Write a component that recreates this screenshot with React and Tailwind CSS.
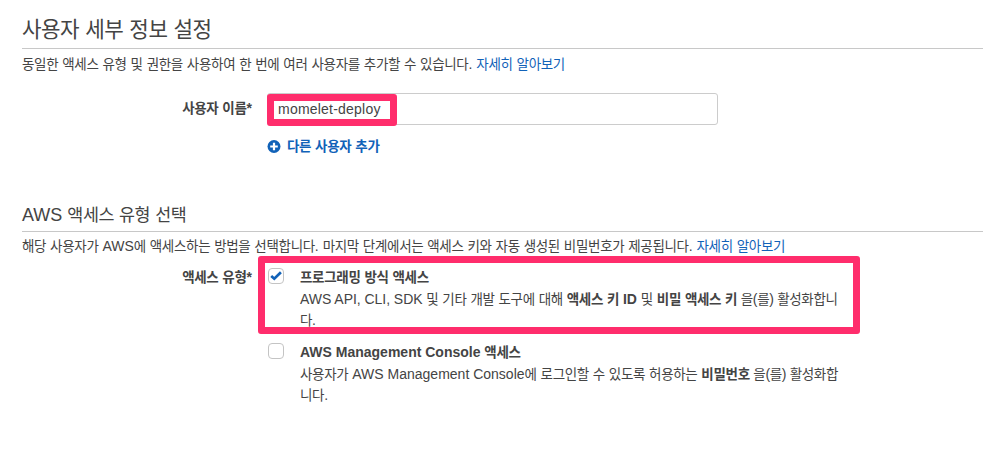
import React from "react";

// Hangul runs are set slightly smaller and tighter than the Latin text around them.
function T({ children }) {
  return String(children)
    .split(/([가-힣]+)/)
    .filter(Boolean)
    .map((part, i) =>
      /[가-힣]/.test(part) ? (
        <span key={i} className="text-[0.965em] tracking-[-0.0237em]">
          {part}
        </span>
      ) : (
        part
      ),
    );
}

function Link({ children }) {
  return (
    <a href="#" className="text-[#1162b8]">
      <T>{children}</T>
    </a>
  );
}

function Checkbox({ checked }) {
  return (
    <span className="flex h-4 w-4 shrink-0 items-center justify-center rounded-[4px] border border-[#c4c4c4] bg-white">
      {checked && (
        <svg viewBox="0 0 12 10" className="h-[10px] w-3" fill="none" stroke="#1162b8" strokeWidth="2.7">
          <path d="M1.2 4.9 L4.3 7.7 L10.9 1.3" />
        </svg>
      )}
    </span>
  );
}

function Option({ checked, title, children }) {
  return (
    <div className="flex h-[75px] gap-4">
      <div className="pt-px">
        <Checkbox checked={checked} />
      </div>
      <div className="whitespace-nowrap">
        <div className="h-[22px] font-bold leading-[21px]">
          <T>{title}</T>
        </div>
        <div className="leading-[21px]">{children}</div>
      </div>
    </div>
  );
}

export default function App() {
  return (
    <main className="relative h-[464px] w-[1004px] overflow-hidden bg-white pl-[22px] pr-[21px] font-['Liberation_Sans','Noto_Sans_CJK_KR',sans-serif] text-[14px] text-[#444444]">
      <section className="h-[200px] pt-[16px]">
        <h1 className="h-[33px] border-b border-[#c8c8c8] text-[22px] leading-[28px]">
          <T>사용자 세부 정보 설정</T>
        </h1>
        <p className="mt-[5px] h-[21px] whitespace-nowrap leading-[21px] tracking-[0.02px]">
          <T>동일한 액세스 유형 및 권한을 사용하여 한 번에 여러 사용자를 추가할 수 있습니다. </T>
          <Link>자세히 알아보기</Link>
        </p>
        <div className="mt-[18px] flex">
          <div className="w-[230px] text-right font-bold leading-[30px]">
            <T>사용자 이름*</T>
          </div>
          <div className="ml-[15px]">
            <div className="flex h-8 w-[451px] items-center rounded-[3px] border border-[#cccccc] pl-[10px] tracking-[0.22px]">
              momelet-deploy
            </div>
            <div className="mt-[11px] flex h-[21px] items-center gap-[6px] font-bold">
              <svg viewBox="0 0 14 14" className="h-[14px] w-[14px]">
                <circle cx="7" cy="6.5" r="6.5" fill="#1162b8" />
                <path d="M7 2.7v7.6M3.2 6.5h7.6" stroke="#fff" strokeWidth="2.2" />
              </svg>
              <span>
                <Link>다른 사용자 추가</Link>
              </span>
            </div>
          </div>
        </div>
      </section>

      <section>
        <h2 className="h-[32px] border-b border-[#c8c8c8] pt-px text-[18px] leading-[28px]">
          <T>AWS 액세스 유형 선택</T>
        </h2>
        <p className="mt-[4px] h-[21px] whitespace-nowrap leading-[21px]">
          <T>해당 사용자가 AWS에 액세스하는 방법을 선택합니다. 마지막 단계에서는 액세스 키와 자동 생성된 비밀번호가 제공됩니다. </T>
          <Link>자세히 알아보기</Link>
        </p>
        <div className="mt-[10px] flex">
          <div className="w-[230px] text-right font-bold leading-[21px]">
            <T>액세스 유형*</T>
          </div>
          <div className="ml-[16px]">
            <Option checked title="프로그래밍 방식 액세스">
              <span className="tracking-[-0.04px]">
                <T>AWS API, CLI, SDK 및 기타 개발 도구에 대해 </T>
              </span>
              <b>
                <T>액세스 키 ID</T>
              </b>
              <T> 및 </T>
              <b>
                <T>비밀 액세스 키</T>
              </b>
              <span className="tracking-[-0.35px]">
                <T> 을(를) 활성화합니</T>
              </span>
              <br />
              <T>다.</T>
            </Option>
            <Option title="AWS Management Console 액세스">
              <T>사용자가 AWS Management Console에 로그인할 수 있도록 허용하는 </T>
              <b>
                <T>비밀번호</T>
              </b>
              <span className="tracking-[-0.35px]">
                <T> 을(를) 활성화합</T>
              </span>
              <br />
              <T>니다.</T>
            </Option>
          </div>
        </div>
      </section>

      <div className="absolute left-[267px] top-[94px] h-[32px] w-[130px] rounded-[3px] border-[7px] border-[#ff2d6c]" />
      <div className="absolute left-[258px] top-[256px] h-[78px] w-[602px] rounded-[3px] border-[7px] border-[#ff2d6c]" />
    </main>
  );
}
